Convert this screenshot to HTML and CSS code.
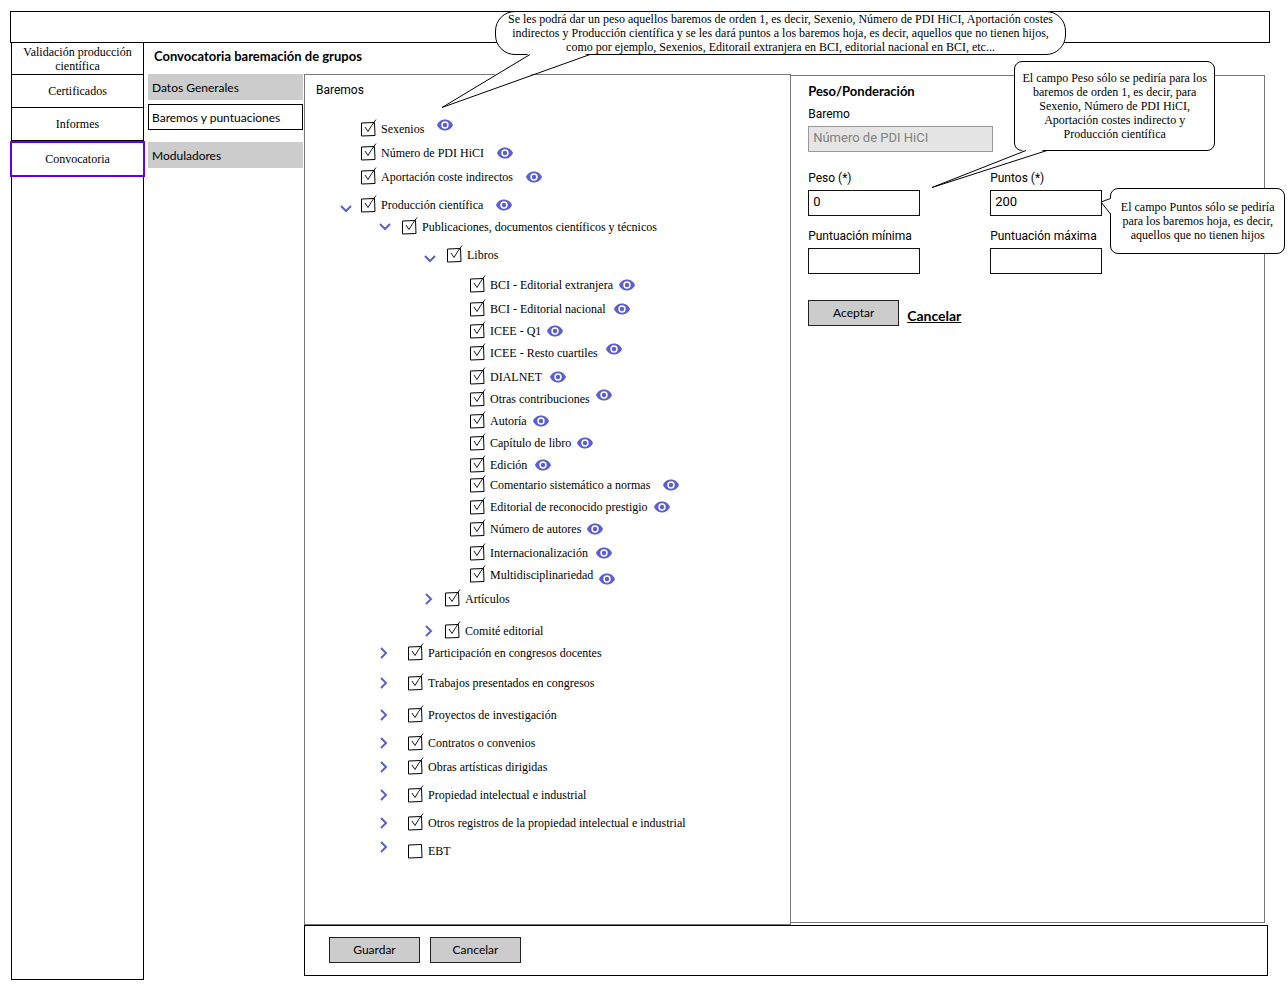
FILE: index.html
```html
<!DOCTYPE html>
<html lang="es">
<head>
<meta charset="utf-8">
<title>Convocatoria baremación de grupos</title>
<meta name="viewport" content="width=device-width, initial-scale=1">
<link rel="stylesheet" href="styles.css">
</head>
<body>
<svg class="sprite" aria-hidden="true">
  <symbol id="eye" viewBox="0 0 16 12">
    <path fill="#5b5fd0" fill-rule="evenodd" d="M8 0.5C4.4 0.5 1.3 2.700 0 6c1.300 3.300 4.400 5.500 8 5.500s6.700-2.200 8-5.500C14.700 2.700 11.600 0.500 8 0.500zM8 9.700a3.700 3.700 0 1 1 0-7.400 3.700 3.700 0 0 1 0 7.400zM8 3.800a2.200 2.200 0 1 0 0 4.400 2.200 2.200 0 0 0 0-4.400z"/>
  </symbol>
  <symbol id="down" viewBox="0 0 12 12">
    <path fill="none" stroke="#5b5fd0" stroke-width="2" d="M1 3l5 5 5-5"/>
  </symbol>
  <symbol id="right" viewBox="0 0 12 12">
    <path fill="none" stroke="#5b5fd0" stroke-width="2" d="M2 1l5 5-5 5"/>
  </symbol>
</svg>

<header class="topbar">
  <aside class="callout callout-tree">
    Se les podrá dar un peso aquellos baremos de orden 1, es decir, Sexenio, Número de PDI HiCI, Aportación costes indirectos y Producción científica y se les dará puntos a los baremos hoja, es decir, aquellos que no tienen hijos, como por ejemplo, Sexenios, Editorail extranjera en BCI, editorial nacional en BCI, etc...
    <svg class="tail" width="150" height="56" viewBox="0 0 150 56" aria-hidden="true"><path fill="#fff" d="M89 0L1 54 149 0z"/><path fill="none" stroke="#000" d="M89 1.500L1 54.500 149 1.500"/></svg>
  </aside>
</header>

<div class="shell">
  <nav class="sidebar" aria-label="Principal">
    <a href="#validacion">Validación producción científica</a>
    <a href="#certificados">Certificados</a>
    <a href="#informes">Informes</a>
    <a href="#convocatoria" class="current">Convocatoria</a>
  </nav>

  <main class="content">
    <h1>Convocatoria baremación de grupos</h1>
    <div class="columns">
      <nav class="submenu" aria-label="Convocatoria">
        <a href="#datos">Datos Generales</a>
        <a href="#baremos" class="current">Baremos y puntuaciones</a>
        <a href="#moduladores" class="apart">Moduladores</a>
      </nav>

      <div class="work">
        <div class="panels">
          <section class="panel tree-panel">
            <h2 class="caption">Baremos</h2>
            <ul class="tree">
              <li><div class="row"><span class="slot"></span><label><input type="checkbox" checked>Sexenios</label><button class="view far high" aria-label="Ver"><svg><use href="#eye"/></svg></button></div></li>
              <li><div class="row g4"><span class="slot"></span><label><input type="checkbox" checked>Número de PDI HiCI</label><button class="view far" aria-label="Ver"><svg><use href="#eye"/></svg></button></div></li>
              <li><div class="row g4"><span class="slot"></span><label><input type="checkbox" checked>Aportación coste indirectos</label><button class="view far" aria-label="Ver"><svg><use href="#eye"/></svg></button></div></li>
              <li><div class="row g8"><button class="slot low" aria-label="Contraer"><svg><use href="#down"/></svg></button><label><input type="checkbox" checked>Producción científica</label><button class="view far" aria-label="Ver"><svg><use href="#eye"/></svg></button></div>
                <ul class="level2">
                  <li><div class="row g2"><button class="slot mid" aria-label="Contraer"><svg><use href="#down"/></svg></button><label><input type="checkbox" checked>Publicaciones, documentos científicos y técnicos</label></div>
                    <ul class="level3">
                      <li><div class="row g8"><button class="slot mid low" aria-label="Contraer"><svg><use href="#down"/></svg></button><label><input type="checkbox" checked>Libros</label></div>
                        <ul class="level4">
                          <li><div class="row g10"><label><input type="checkbox" checked>BCI - Editorial extranjera</label><button class="view" aria-label="Ver"><svg><use href="#eye"/></svg></button></div></li>
                          <li><div class="row g4"><label><input type="checkbox" checked>BCI - Editorial nacional</label><button class="view wide" aria-label="Ver"><svg><use href="#eye"/></svg></button></div></li>
                          <li><div class="row g2"><label><input type="checkbox" checked>ICEE - Q1</label><button class="view" aria-label="Ver"><svg><use href="#eye"/></svg></button></div></li>
                          <li><div class="row g2"><label><input type="checkbox" checked>ICEE - Resto cuartiles</label><button class="view wide high" aria-label="Ver"><svg><use href="#eye"/></svg></button></div></li>
                          <li><div class="row g4"><label><input type="checkbox" checked>DIALNET</label><button class="view wide" aria-label="Ver"><svg><use href="#eye"/></svg></button></div></li>
                          <li><div class="row g2"><label><input type="checkbox" checked>Otras contribuciones</label><button class="view high" aria-label="Ver"><svg><use href="#eye"/></svg></button></div></li>
                          <li><div class="row g2"><label><input type="checkbox" checked>Autoría</label><button class="view" aria-label="Ver"><svg><use href="#eye"/></svg></button></div></li>
                          <li><div class="row g2"><label><input type="checkbox" checked>Capítulo de libro</label><button class="view" aria-label="Ver"><svg><use href="#eye"/></svg></button></div></li>
                          <li><div class="row g2"><label><input type="checkbox" checked>Edición</label><button class="view wide" aria-label="Ver"><svg><use href="#eye"/></svg></button></div></li>
                          <li><div class="row"><label><input type="checkbox" checked>Comentario sistemático a normas</label><button class="view far" aria-label="Ver"><svg><use href="#eye"/></svg></button></div></li>
                          <li><div class="row g2"><label><input type="checkbox" checked>Editorial de reconocido prestigio</label><button class="view" aria-label="Ver"><svg><use href="#eye"/></svg></button></div></li>
                          <li><div class="row g2"><label><input type="checkbox" checked>Número de autores</label><button class="view" aria-label="Ver"><svg><use href="#eye"/></svg></button></div></li>
                          <li><div class="row g4"><label><input type="checkbox" checked>Internacionalización</label><button class="view wide" aria-label="Ver"><svg><use href="#eye"/></svg></button></div></li>
                          <li><div class="row g2"><label><input type="checkbox" checked>Multidisciplinariedad</label><button class="view low" aria-label="Ver"><svg><use href="#eye"/></svg></button></div></li>
                        </ul>
                      </li>
                      <li><div class="row g4"><button class="slot" aria-label="Expandir"><svg><use href="#right"/></svg></button><label><input type="checkbox" checked>Artículos</label></div></li>
                      <li><div class="row g12"><button class="slot" aria-label="Expandir"><svg><use href="#right"/></svg></button><label><input type="checkbox" checked>Comité editorial</label></div></li>
                    </ul>
                  </li>
                  <li><div class="row g2"><button class="slot broad" aria-label="Expandir"><svg><use href="#right"/></svg></button><label><input type="checkbox" checked>Participación en congresos docentes</label></div></li>
                  <li><div class="row g10"><button class="slot broad" aria-label="Expandir"><svg><use href="#right"/></svg></button><label><input type="checkbox" checked>Trabajos presentados en congresos</label></div></li>
                  <li><div class="row g12"><button class="slot broad" aria-label="Expandir"><svg><use href="#right"/></svg></button><label><input type="checkbox" checked>Proyectos de investigación</label></div></li>
                  <li><div class="row g8"><button class="slot broad" aria-label="Expandir"><svg><use href="#right"/></svg></button><label><input type="checkbox" checked>Contratos o convenios</label></div></li>
                  <li><div class="row g4"><button class="slot broad" aria-label="Expandir"><svg><use href="#right"/></svg></button><label><input type="checkbox" checked>Obras artísticas dirigidas</label></div></li>
                  <li><div class="row g8"><button class="slot broad" aria-label="Expandir"><svg><use href="#right"/></svg></button><label><input type="checkbox" checked>Propiedad intelectual e industrial</label></div></li>
                  <li><div class="row g8"><button class="slot broad" aria-label="Expandir"><svg><use href="#right"/></svg></button><label><input type="checkbox" checked>Otros registros de la propiedad intelectual e industrial</label></div></li>
                  <li><div class="row g8"><button class="slot broad high" aria-label="Expandir"><svg><use href="#right"/></svg></button><label><input type="checkbox">EBT</label></div></li>
                </ul>
              </li>
            </ul>
          </section>

          <section class="panel form-panel">
            <h2>Peso/Ponderación</h2>
            <form>
              <div class="field baremo">
                <label for="baremo">Baremo</label>
                <input id="baremo" type="text" value="Número de PDI HiCI" disabled>
              </div>
              <div class="scores">
                <div class="field">
                  <label for="peso">Peso (*)</label>
                  <input id="peso" type="text" value="0">
                </div>
                <div class="field">
                  <label for="puntos">Puntos (*)</label>
                  <input id="puntos" type="text" value="200">
                </div>
                <div class="field">
                  <label for="minima">Puntuación mínima</label>
                  <input id="minima" type="text">
                </div>
                <div class="field">
                  <label for="maxima">Puntuación máxima</label>
                  <input id="maxima" type="text">
                </div>
              </div>
              <div class="actions">
                <button type="button" class="button">Aceptar</button>
                <a href="#cancelar">Cancelar</a>
              </div>
            </form>
            <aside class="callout callout-peso">
              El campo Peso sólo se pediría para los baremos de orden 1, es decir, para Sexenio, Número de PDI HiCI, Aportación costes indirecto y Producción científica
              <svg class="tail" width="118" height="40" viewBox="0 0 118 40" aria-hidden="true"><path fill="#fff" d="M95 0L1 38 116 0z"/><path fill="none" stroke="#000" d="M95 1.500L1 38.500 116 1.500"/></svg>
            </aside>
            <aside class="callout callout-puntos">
              El campo Puntos sólo se pediría para los baremos hoja, es decir, aquellos que no tienen hijos
              <svg class="tail" width="11" height="18" viewBox="0 0 11 18" aria-hidden="true"><path fill="#fff" d="M11 1L1 5l10 12z"/><path fill="none" stroke="#000" d="M10.500 1.500L1 5l9.500 12"/></svg>
            </aside>
          </section>
        </div>

        <footer class="footer">
          <button type="button" class="button">Guardar</button>
          <button type="button" class="button">Cancelar</button>
        </footer>
      </div>
    </div>
  </main>
</div>
</body>
</html>
```
FILE: styles.css
```css
* {
  box-sizing: border-box;
}

body {
  display: flex;
  flex-direction: column;
  min-height: 100vh;
  margin: 0;
  padding: 11px 18px 21px 10px;
  background: #fff;
  color: #000;
  font: 12px/14px "Liberation Serif", serif;
}

ul {
  margin: 0;
  padding: 0;
  list-style: none;
}

button,
input {
  margin: 0;
  font: inherit;
  color: inherit;
}

a {
  color: inherit;
}

.sprite {
  position: absolute;
  width: 0;
  height: 0;
}

/* Frame */

.topbar {
  position: relative;
  height: 32px;
  border: 1px solid #000;
}

.shell {
  display: flex;
  flex: 1;
}

.sidebar {
  width: 133px;
  margin-left: 1px;
  border: solid #000;
  border-width: 0 1px 1px;
}

.sidebar a {
  display: flex;
  align-items: center;
  justify-content: center;
  height: 33px;
  padding: 0 8px;
  border-bottom: 1px solid #000;
  text-align: center;
  text-decoration: none;
}

.sidebar a:first-child {
  height: 32px;
}

.sidebar .current {
  height: 36px;
  margin: 0 -2px;
  border: 2px solid #6000f0;
}

.content {
  display: flex;
  flex: 1;
  flex-direction: column;
  min-width: 0;
  padding: 0 2px 4px 4px;
}

h1,
h2 {
  margin: 0;
  font: bold 13px/16px Lato, sans-serif;
}

h1 {
  padding: 5px 6px 10px;
}

.columns {
  display: flex;
  flex: 1;
}

.submenu {
  display: flex;
  flex-direction: column;
  gap: 4px;
  width: 156px;
  padding-right: 1px;
}

.submenu a {
  height: 26px;
  padding: 0 3px;
  border: 1px solid #ccc;
  background: #ccc;
  font: 12px/25px Lato, sans-serif;
  text-decoration: none;
}

.submenu .current {
  border-color: #000;
  background: #fff;
}

.submenu .apart {
  margin-top: 8px;
}

.work {
  display: flex;
  flex: 1;
  flex-direction: column;
  min-width: 0;
}

.panels {
  display: grid;
  flex: 1;
  grid-template-columns: 73fr 71fr;
  margin-right: 3px;
}

.panel {
  border: 1px solid #777;
}

.tree-panel {
  padding: 7px 11px 40px;
}

.footer {
  display: flex;
  align-items: center;
  gap: 10px;
  height: 51px;
  padding: 0 24px 2px;
  border: 1px solid #000;
}

.button {
  width: 91px;
  height: 26px;
  padding: 0;
  border: 1px solid #222;
  background: #ccc;
  font: 12px/24px Lato, sans-serif;
}

/* Tree */

.caption {
  font: 12px/16px Roboto, sans-serif;
}

.tree {
  padding: 21px 0 0 24px;
}

.level2 {
  padding-left: 39px;
}

.level3,
.level4 {
  padding-left: 45px;
}

.row {
  display: flex;
  align-items: center;
  height: 20px;
}

.g2 { margin-top: 2px; }
.g4 { margin-top: 4px; }
.g8 { margin-top: 8px; }
.g10 { margin-top: 10px; }
.g12 { margin-top: 12px; }

.row label {
  display: flex;
  align-items: center;
  gap: 3px;
  white-space: nowrap;
}

.row input {
  appearance: none;
  width: 18px;
  height: 20px;
  background: url("data:image/svg+xml,%3Csvg xmlns='http://www.w3.org/2000/svg' width='18' height='20'%3E%3Cpath fill='none' stroke='%23000' d='M1.500 4L14.500 3.500l.500 13-13.500.500z'/%3E%3C/svg%3E");
}

.row input:checked {
  background: url("data:image/svg+xml,%3Csvg xmlns='http://www.w3.org/2000/svg' width='18' height='20'%3E%3Cpath fill='none' stroke='%23000' d='M1.500 4L14.500 3.500l.500 13-13.500.500z'/%3E%3Cpath fill='none' stroke='%23000' stroke-width='.900' d='M5 8l3 4.500Q11 7 16 .500'/%3E%3C/svg%3E");
}

.slot,
.view {
  display: flex;
  flex: none;
  padding: 0;
  border: 0;
  background: none;
}

.slot { width: 20px; }
.slot.mid { width: 22px; }
.slot.broad { width: 28px; }

.slot svg {
  width: 12px;
  height: 12px;
}

.view { margin-left: 6px; }
.view.wide { margin-left: 8px; }
.view.far { margin-left: 13px; }

.view svg {
  width: 16px;
  height: 12px;
}

.high {
  align-self: flex-start;
}

.low {
  align-self: flex-end;
}

/* Score form */

.form-panel {
  position: relative;
  margin: 1px 0 2px -1px;
  padding: 7px 17px;
}

.field {
  display: flex;
  flex-direction: column;
  gap: 4px;
  font: 12px/16px Roboto, sans-serif;
}

.field input {
  width: 112px;
  height: 26px;
  padding: 0 4px 3px;
  border: 1px solid #111;
  background: #fff;
  font-size: 13px;
}

.baremo {
  margin-top: 7px;
}

.baremo input {
  width: 185px;
}

.field input:disabled {
  border-color: #999;
  background: #e5e5e5;
  color: #808080;
}

.scores {
  display: grid;
  grid-template-columns: 112px 112px;
  gap: 12px 70px;
  margin-top: 18px;
}

.actions {
  display: flex;
  align-items: center;
  gap: 8px;
  margin-top: 26px;
}

.actions a {
  padding-top: 6px;
  font: bold 14px/20px Lato, sans-serif;
}

/* Notes over the page */

.callout {
  position: absolute;
  z-index: 1;
  display: flex;
  align-items: center;
  border: 1px solid #000;
  border-radius: 8px;
  background: #fff;
  text-align: center;
}

.tail {
  position: absolute;
}

.callout-tree {
  top: -1px;
  left: 484px;
  width: 571px;
  padding: 0 10px;
  border-radius: 20px;
}

.callout-tree .tail {
  top: 41px;
  left: -55px;
}

.callout-peso {
  top: -15px;
  left: 223px;
  width: 201px;
  height: 90px;
  padding: 0 6px;
}

.callout-peso .tail {
  top: 87px;
  left: -84px;
}

.callout-puntos {
  top: 112px;
  left: 319px;
  width: 175px;
  height: 66px;
  padding: 0 8px;
}

.callout-puntos .tail {
  top: 8px;
  left: -11px;
}
```
